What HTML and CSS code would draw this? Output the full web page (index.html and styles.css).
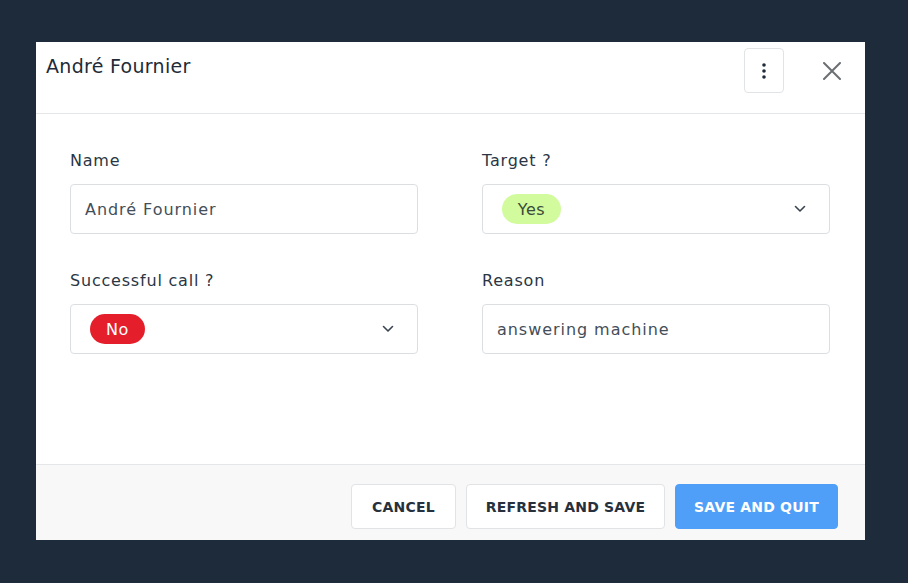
FILE: index.html
```html
<!DOCTYPE html>
<html>
<head>
<meta charset="utf-8">
<link rel="stylesheet" href="styles.css">
</head>
<body>
<div class="backdrop">
  <div class="modal">
    <div class="modal-header">
      <h1 class="title">André Fournier</h1>
      <div class="header-actions">
        <button class="icon-btn kebab" aria-label="More">
          <svg width="4" height="16" viewBox="0 0 4 16"><circle cx="2" cy="2" r="1.8" fill="#1f2b38"/><circle cx="2" cy="8" r="1.8" fill="#1f2b38"/><circle cx="2" cy="14" r="1.8" fill="#1f2b38"/></svg>
        </button>
        <button class="close-btn" aria-label="Close">
          <svg width="18" height="18" viewBox="0 0 18 18"><path d="M1 1 L17 17 M17 1 L1 17" stroke="#6b6f73" stroke-width="2" stroke-linecap="round" fill="none"/></svg>
        </button>
      </div>
    </div>
    <div class="modal-body">
      <div class="form-grid">
        <div class="field">
          <label class="label">Name</label>
          <div class="control"><span class="value">André Fournier</span></div>
        </div>
        <div class="field">
          <label class="label">Target ?</label>
          <div class="control select"><span class="pill pill-yes">Yes</span>
            <svg class="chev" width="12" height="8" viewBox="0 0 12 8"><path d="M1.5 1.5 L6 6 L10.5 1.5" stroke="#3a4450" stroke-width="1.6" fill="none" stroke-linecap="round" stroke-linejoin="round"/></svg>
          </div>
        </div>
        <div class="field">
          <label class="label">Successful call ?</label>
          <div class="control select"><span class="pill pill-no">No</span>
            <svg class="chev" width="12" height="8" viewBox="0 0 12 8"><path d="M1.5 1.5 L6 6 L10.5 1.5" stroke="#3a4450" stroke-width="1.6" fill="none" stroke-linecap="round" stroke-linejoin="round"/></svg>
          </div>
        </div>
        <div class="field">
          <label class="label">Reason</label>
          <div class="control"><span class="value">answering machine</span></div>
        </div>
      </div>
    </div>
    <div class="modal-footer">
      <button class="btn btn-outline btn-cancel">CANCEL</button>
      <button class="btn btn-outline btn-refresh">REFRESH AND SAVE</button>
      <button class="btn btn-primary btn-save">SAVE AND QUIT</button>
    </div>
  </div>
</div>
</body>
</html>
```
FILE: styles.css
```css
* { box-sizing: border-box; }
html, body { margin: 0; padding: 0; }
body {
  background: #1e2b3a;
  font-family: "DejaVu Sans", "Liberation Sans", sans-serif;
  width: 908px;
  height: 583px;
  overflow: hidden;
}
.backdrop {
  padding: 42px 43px 0 36px;
}
.modal {
  width: 829px;
  height: 498px;
  background: #ffffff;
  display: flex;
  flex-direction: column;
}
.modal-header {
  height: 72px;
  border-bottom: 1px solid #e4e6e8;
  display: flex;
  justify-content: space-between;
  align-items: flex-start;
  padding: 0 24px 0 10px;
}
.title {
  margin: 13px 0 0 0;
  font-size: 19px;
  font-weight: normal;
  color: #1f2b38;
  letter-spacing: 0.3px;
}
.header-actions {
  display: flex;
  align-items: center;
  margin-top: 6px;
  gap: 39px;
}
.icon-btn {
  width: 40px;
  height: 45px;
  border: 1px solid #e1e3e5;
  border-radius: 4px;
  background: #fff;
  display: flex;
  align-items: center;
  justify-content: center;
  padding: 0;
}
.close-btn {
  width: 18px;
  height: 18px;
  border: none;
  background: none;
  padding: 0;
  display: flex;
}
.modal-body {
  flex: 1;
  padding: 35px 35px 0 34px;
}
.form-grid {
  display: grid;
  grid-template-columns: 348px 348px;
  column-gap: 64px;
  row-gap: 35px;
}
.label {
  display: block;
  font-size: 16px;
  color: #2a3644;
  height: 35px;
  line-height: 24px;
  letter-spacing: 0.8px;
}
.control {
  height: 50px;
  border: 1px solid #dcdfe2;
  border-radius: 4px;
  display: flex;
  align-items: center;
  padding: 0 14px;
  justify-content: space-between;
}
.value {
  font-size: 16px;
  color: #444e59;
  letter-spacing: 0.95px;
}
.select {
  padding: 0 23px 0 19px;
}
.pill {
  display: inline-flex;
  align-items: center;
  justify-content: center;
  height: 30px;
  border-radius: 15px;
  font-size: 16px;
  letter-spacing: 0.6px;
}
.pill-yes {
  background: #d1fb9c;
  color: #3b4a3a;
  width: 59px;
}
.pill-no {
  background: #e41f2b;
  color: #ffffff;
  width: 55px;
}
.chev { display: block; }
.modal-footer {
  height: 76px;
  background: #f8f8f8;
  border-top: 1px solid #e4e6e8;
  display: flex;
  justify-content: flex-end;
  align-items: flex-start;
  padding: 19px 27px 0 0;
  gap: 10px;
}
.btn {
  height: 45px;
  border-radius: 4px;
  font-family: "DejaVu Sans", sans-serif;
  font-weight: bold;
  font-size: 14px;
  letter-spacing: 0.2px;
  padding: 0;
}
.btn-outline {
  background: #fff;
  border: 1px solid #e1e3e5;
  color: #26313d;
}
.btn-primary {
  background: #4f9ef8;
  border: 1px solid #4f9ef8;
  color: #fff;
}
.btn-cancel { width: 105px; }
.btn-refresh { width: 199px; }
.btn-save { width: 163px; }
```
